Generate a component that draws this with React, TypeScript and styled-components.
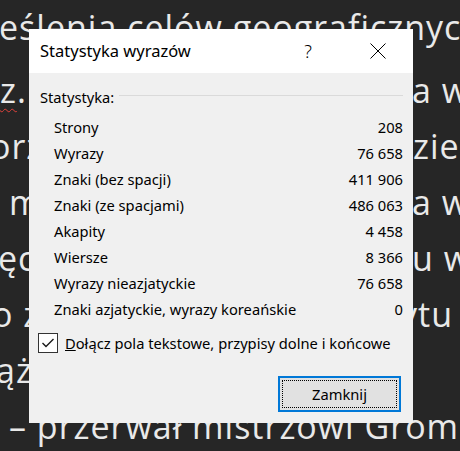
import React from 'react';
import styled, { createGlobalStyle } from 'styled-components';

interface StatRow {
  label: string;
  value: string;
}

interface DocLine {
  left: string;
  right?: string;
  indent?: number;
  rightIndent?: number;
}

const stats: StatRow[] = [
  { label: 'Strony', value: '208' },
  { label: 'Wyrazy', value: '76 658' },
  { label: 'Znaki (bez spacji)', value: '411 906' },
  { label: 'Znaki (ze spacjami)', value: '486 063' },
  { label: 'Akapity', value: '4 458' },
  { label: 'Wiersze', value: '8 366' },
  { label: 'Wyrazy nieazjatyckie', value: '76 658' },
  { label: 'Znaki azjatyckie, wyrazy koreańskie', value: '0' },
];

// fragments of the document that peek out from behind the dialog
const docLines: DocLine[] = [
  { left: 'z.', right: 'a wy', indent: 0, rightIndent: -1 },
  { left: 'orz', right: 'ziel', indent: -10 },
  { left: 'm', right: 'a wi', indent: 9, rightIndent: -1 },
  { left: 'ęc', right: 'u wa', indent: -2, rightIndent: -1 },
  { left: 'o z', right: 'ytu', indent: -8, rightIndent: -13 },
  { left: 'ąż', indent: -4 },
];

const GlobalStyle = createGlobalStyle`
  html, body {
    margin: 0;
    padding: 0;
    background: #262626;
  }
  body {
    font-family: "Noto Sans", "Open Sans", sans-serif;
  }
`;

const App: React.FC = () => {
  return (
    <>
      <GlobalStyle />
      <Page>
        <Doc>
          <FirstLine>eślenia celów geograficznych</FirstLine>
          {docLines.map((line, i) => (
            <Line key={i}>
              <LeftPart indent={line.indent ?? 0}>
                {i === 0 ? (
                  <>
                    <Misspelled>z</Misspelled>.
                  </>
                ) : (
                  line.left
                )}
              </LeftPart>
              {line.right && <RightPart indent={line.rightIndent ?? 0}>{line.right}</RightPart>}
            </Line>
          ))}
          <LastLine>– przerwał mistrzowi Grom</LastLine>
        </Doc>

        <Dialog role="dialog" aria-label="Statystyka wyrazów">
          <TitleBar>
            <Title>Statystyka wyrazów</Title>
            <TitleButton aria-label="Pomoc">?</TitleButton>
            <TitleButton aria-label="Zamknij">
              <svg width="16" height="16" viewBox="0 0 16 16">
                <path d="M0.5 0.5 L15.5 15.5 M15.5 0.5 L0.5 15.5" stroke="#000" strokeWidth="1" fill="none" />
              </svg>
            </TitleButton>
          </TitleBar>

          <Body>
            <GroupHeader>
              <GroupLabel>Statystyka:</GroupLabel>
              <GroupRule />
            </GroupHeader>

            <StatList>
              {stats.map((s) => (
                <StatItem key={s.label}>
                  <span>{s.label}</span>
                  <span>{s.value}</span>
                </StatItem>
              ))}
            </StatList>

            <CheckRow>
              <CheckBox>
                <svg width="18" height="18" viewBox="0 0 18 18">
                  <polyline points="3.5,9 7,12.5 14.5,5" stroke="#1a1a1a" strokeWidth="1.4" fill="none" />
                </svg>
              </CheckBox>
              <span>
                <u>D</u>ołącz pola tekstowe, przypisy dolne i końcowe
              </span>
            </CheckRow>

            <Footer>
              <CloseButton>Zamknij</CloseButton>
            </Footer>
          </Body>
        </Dialog>
      </Page>
    </>
  );
};

const Page = styled.div`
  position: relative;
  width: 460px;
  height: 451px;
  overflow: hidden;
  background: #262626;
`;

const Doc = styled.div`
  display: flex;
  flex-direction: column;
  color: #e9e9e9;
  font-family: "Open Sans", "Noto Sans", sans-serif;
  font-size: 34px;
  letter-spacing: 1px;
  line-height: 56px;
  white-space: pre;
  margin-top: -1px;
`;

const FirstLine = styled.div`
  margin-left: -1px;
  margin-bottom: 7px;
`;

const Line = styled.div`
  display: flex;
  height: 56px;
`;

const LeftPart = styled.div<{ indent: number }>`
  width: 413px;
  flex-shrink: 0;
  text-indent: ${(p) => p.indent}px;
`;

const RightPart = styled.div<{ indent: number }>`
  text-indent: ${(p) => p.indent}px;
`;

const LastLine = styled.div`
  margin-left: 9px;
`;

const Misspelled = styled.span`
  text-decoration: underline wavy #e0413a;
  text-decoration-thickness: 1px;
  text-underline-offset: 5px;
`;

const Dialog = styled.div`
  position: absolute;
  left: 29px;
  top: 29px;
  width: 384px;
  height: 394px;
  display: flex;
  flex-direction: column;
  background: #f0f0f0;
  color: #000;
  font-family: "Noto Sans", "Open Sans", sans-serif;
  font-size: 14.7px;
`;

const TitleBar = styled.div`
  display: flex;
  align-items: center;
  height: 44px;
  padding-left: 11px;
  padding-right: 12px;
  background: #ffffff;
`;

const Title = styled.div`
  flex: 1;
  font-size: 16.5px;
  padding-bottom: 1px;
`;

const TitleButton = styled.div`
  width: 46px;
  height: 44px;
  display: flex;
  align-items: center;
  justify-content: center;
  font-size: 18px;
  font-weight: 300;

  & + & {
    margin-left: 24px;
  }
`;

const Body = styled.div`
  flex: 1;
  display: flex;
  flex-direction: column;
  padding: 14px 10px 12px 11px;
`;

const GroupHeader = styled.div`
  display: flex;
  align-items: center;
  gap: 5px;
  height: 20px;
`;

const GroupLabel = styled.span`
  white-space: nowrap;
`;

const GroupRule = styled.div`
  flex: 1;
  height: 1px;
  background: #dadada;
  margin-top: -3px;
`;

const StatList = styled.div`
  display: flex;
  flex-direction: column;
  margin-top: 7px;
  padding-left: 14px;
`;

const StatItem = styled.div`
  display: flex;
  justify-content: space-between;
  align-items: center;
  height: 26px;
`;

const CheckRow = styled.div`
  display: flex;
  align-items: center;
  gap: 7px;
  height: 20px;
  margin-top: 11px;
  margin-left: -2px;
`;

const CheckBox = styled.div`
  width: 18px;
  height: 18px;
  border: 1px solid #333;
  background: #fff;
  display: flex;
  align-items: center;
  justify-content: center;
`;

const Footer = styled.div`
  display: flex;
  justify-content: flex-end;
  margin-top: 23px;
  padding-right: 2px;
`;

const CloseButton = styled.button`
  position: relative;
  width: 123px;
  height: 36px;
  border: 2px solid #0078d7;
  background: #e1e1e1;
  font-family: inherit;
  font-size: inherit;
  color: #000;
  padding: 0;

  &::after {
    content: '';
    position: absolute;
    inset: 2px;
    border: 1px dotted #000;
  }
`;

export default App;
